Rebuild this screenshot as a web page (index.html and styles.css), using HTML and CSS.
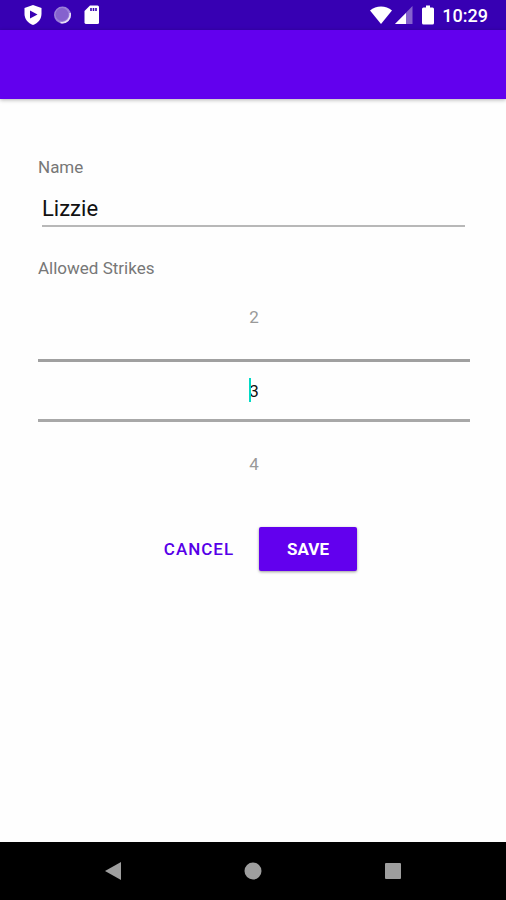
FILE: index.html
```html
<!DOCTYPE html>
<html lang="en">
<head>
<meta charset="utf-8">
<meta name="viewport" content="width=device-width, initial-scale=1">
<title>Edit player</title>
<link rel="stylesheet" href="styles.css">
</head>
<body>
<div class="status-bar">
  <div class="notifications">
    <svg width="18" height="20" viewBox="0 0 18 20" aria-hidden="true"><path fill="#fff" d="M9 0 17.500 3V9C17.500 14 14 18 9 20 4 18 .5 14 .5 9V3Z"/><path fill="#3700b3" d="M6 5.500 13.500 9.500 6 13.500Z"/></svg>
    <svg width="18" height="18" viewBox="0 0 18 18" aria-hidden="true"><circle cx="8.500" cy="9" r="8.500" fill="#9b80d9"/><circle cx="8" cy="8.500" r="6.500" fill="#8562ce"/><path d="M16 7A8 8 0 0 1 6.500 16.500" fill="none" stroke="#e8e0f7" stroke-width="1.600"/></svg>
    <svg width="16" height="20" viewBox="0 0 16 20" aria-hidden="true"><path fill="#fff" d="M6 .5H13.500Q15 .5 15 2V17.500Q15 19 13.500 19H2.500Q.5 19 .5 17.500V6Z"/><path stroke="#3700b3" stroke-width="1.600" d="M7 3V6M9.500 3V6M12 3V6"/></svg>
  </div>
  <div class="system">
    <svg width="22" height="18" viewBox="0 0 22 18" aria-hidden="true"><path fill="#fff" d="M0 4.500C6-1 16-1 22 4.500L11 18Z"/></svg>
    <svg class="signal" width="18" height="18" viewBox="0 0 18 18" aria-hidden="true"><path fill="#8562ce" d="M17.500 0V18H0Z"/><path fill="#fff" d="M11 7V18H0Z"/></svg>
    <svg class="battery" width="12" height="20" viewBox="0 0 12 20" aria-hidden="true"><path fill="#fff" d="M4 .5H8V2.500H10.500Q12 2.500 12 4V18Q12 19.500 10.500 19.500H1.500Q0 19.500 0 18V4Q0 2.500 1.500 2.500H4Z"/></svg>
    <time class="clock">10:29</time>
  </div>
</div>
<header class="app-bar"></header>
<main>
  <form class="form">
    <label class="label" for="name">Name</label>
    <input class="name" id="name" type="text" value="Lizzie">
    <label class="label" for="strikes">Allowed Strikes</label>
    <div class="picker">
      <button class="step" type="button">2</button>
      <div class="current">
        <input class="value" id="strikes" type="text" inputmode="numeric" value="3">
        <span class="caret"></span>
      </div>
      <button class="step" type="button">4</button>
    </div>
    <div class="actions">
      <button class="button cancel" type="button">CANCEL</button>
      <button class="button save" type="submit">SAVE</button>
    </div>
  </form>
</main>
<nav class="nav-bar">
  <button class="nav-button" type="button" aria-label="Back"><svg width="18" height="18" viewBox="0 0 18 18"><path fill="#9e9e9e" d="M17 0V18L1 9Z"/></svg></button>
  <button class="nav-button" type="button" aria-label="Home"><svg width="18" height="18" viewBox="0 0 18 18"><circle cx="9" cy="9" r="8.500" fill="#9e9e9e"/></svg></button>
  <button class="nav-button" type="button" aria-label="Recent apps"><svg width="18" height="18" viewBox="0 0 18 18"><rect x="1" y="1" width="16" height="16" rx="1" fill="#9e9e9e"/></svg></button>
</nav>
</body>
</html>
```
FILE: styles.css
```css
* {
  box-sizing: border-box;
}

body {
  display: flex;
  flex-direction: column;
  min-height: 100vh;
  margin: 0;
  background: #fefefe;
  color: #111;
  font-family: Roboto, sans-serif;
}

button,
input {
  margin: 0;
  padding: 0;
  border: 0;
  border-radius: 0;
  outline: 0;
  background: none;
  color: inherit;
  font: inherit;
}

svg {
  display: block;
}

.status-bar {
  display: flex;
  align-items: center;
  justify-content: space-between;
  height: 30px;
  padding: 0 18px 0 24px;
  background: #3700b3;
  color: #fff;
}

.notifications,
.system {
  display: flex;
  align-items: center;
}

.notifications {
  gap: 12px;
}

.signal {
  margin-left: 3px;
}

.battery {
  margin: 0 8px 0 9px;
}

.clock {
  padding-top: 2px;
  font-size: 18px;
  font-weight: 500;
  line-height: 20px;
}

.app-bar {
  height: 69px;
  background: #6200ee;
  box-shadow: 0 1px 4px rgba(0, 0, 0, 0.3);
}

main {
  flex: 1;
}

.form {
  display: flex;
  flex-direction: column;
  padding: 56px 36px 24px 38px;
}

.label {
  color: #777;
  font-size: 17px;
  line-height: 24px;
}

.name {
  height: 48px;
  margin: 0 5px 29px 4px;
  padding-top: 12px;
  border-bottom: 2px solid #b8b8b8;
  font-size: 22px;
}

.picker {
  display: flex;
  flex-direction: column;
  gap: 5px;
}

.step {
  height: 74px;
  color: #999;
  font-size: 17px;
  line-height: 24px;
}

.current {
  position: relative;
  height: 63px;
  border-top: 3px solid #a0a0a0;
  border-bottom: 3px solid #a8a8a8;
}

.value {
  width: 100%;
  height: 100%;
  font-size: 17px;
  text-align: center;
}

.caret {
  position: absolute;
  top: 16px;
  left: calc(50% - 5px);
  width: 2px;
  height: 24px;
  background: #03dac5;
}

.actions {
  display: flex;
  justify-content: center;
  gap: 12px;
  margin-top: 26px;
}

.button {
  height: 44px;
  border-radius: 2px;
  font-size: 17px;
  font-weight: 500;
}

.cancel {
  width: 96px;
  color: #5600e8;
  letter-spacing: 1px;
}

.save {
  width: 98px;
  background: #6200ee;
  box-shadow: 0 1px 3px rgba(0, 0, 0, 0.4);
  color: #fff;
  font-weight: 700;
}

.nav-bar {
  display: flex;
  align-items: center;
  justify-content: center;
  gap: 92px;
  height: 58px;
  background: #000;
}

.nav-button {
  display: grid;
  width: 48px;
  height: 48px;
  place-items: center;
}
```
